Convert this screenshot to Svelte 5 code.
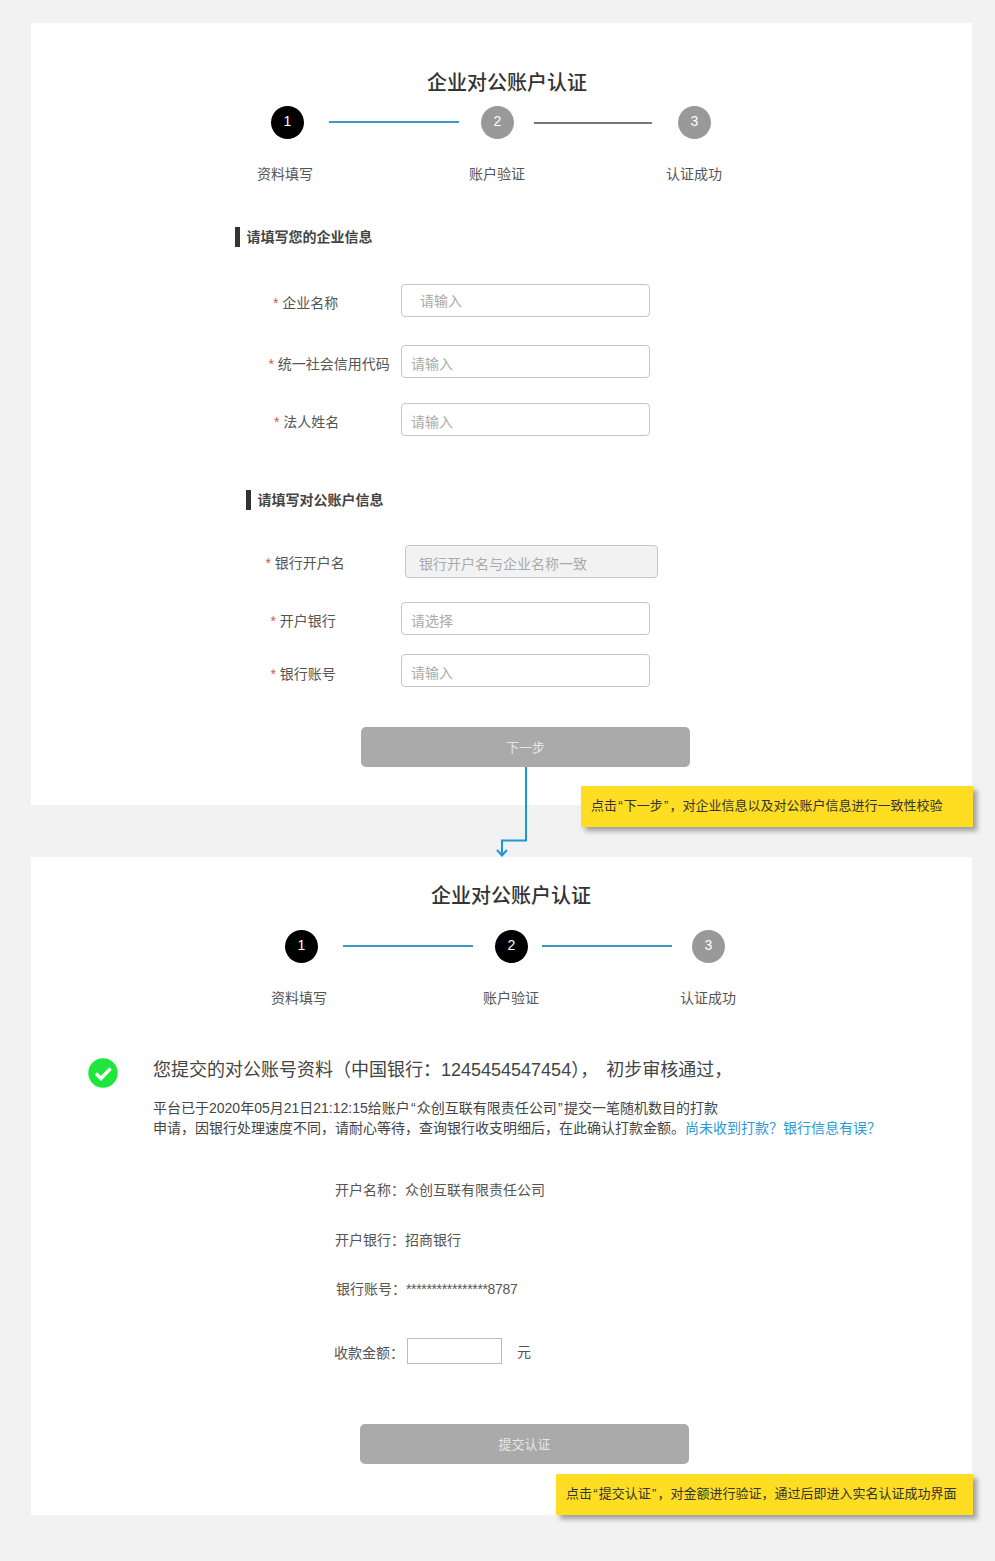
<script>
  const companyRows = [
    { name: '企业名称', left: 242, top: 37, hint: '请输入', pad: 19, drop: 9 },
    { name: '统一社会信用代码', left: 237.5, top: 28, hint: '请输入', drop: 9 },
    { name: '法人姓名', left: 243, top: 25, hint: '请输入', drop: 9 },
  ]
  const bankRows = [
    { name: '银行开户名', left: 234.5, top: 35, hint: '银行开户名与企业名称一致', disabled: true, drop: 8 },
    { name: '开户银行', left: 239.5, top: 24, hint: '请选择', drop: 9 },
    { name: '银行账号', left: 239.5, top: 19, hint: '请输入', drop: 10 },
  ]
  const details = [
    { key: '开户名称：', value: '众创互联有限责任公司', cls: 'd1' },
    { key: '开户银行：', value: '招商银行', cls: 'd2' },
    { key: '银行账号：', value: '****************8787', cls: 'd3' },
  ]
</script>

{#snippet steps(active, cls)}
  <div class="stepper {cls}">
    <span class="dot on">1</span>
    <span class="line blue first"></span>
    <span class="dot" class:on={active > 1}>2</span>
    <span class="line second" class:blue={active > 1}></span>
    <span class="dot">3</span>
  </div>
  <div class="step-labels {cls}">
    <span>资料填写</span>
    <span>账户验证</span>
    <span>认证成功</span>
  </div>
{/snippet}

{#snippet formRow(row)}
  <div class="row" style:margin-top="{row.top}px">
    <label class="row-label" style:padding-left="{row.left}px" style:margin-top="{row.drop}px"><i>*</i> {row.name}</label>
    <input
      class="field"
      class:disabled={row.disabled}
      class:wide={row.pad}
      disabled={row.disabled}
      placeholder={row.hint}
    />
  </div>
{/snippet}

<div class="page">
  <section class="card first-card">
    <h1 class="title t1">企业对公账户认证</h1>
    {@render steps(1, 's1')}

    <h2 class="section sec1">请填写您的企业信息</h2>
    {#each companyRows as row}
      {@render formRow(row)}
    {/each}

    <h2 class="section sec2">请填写对公账户信息</h2>
    {#each bankRows as row}
      {@render formRow(row)}
    {/each}

    <button class="primary next">下一步</button>
  </section>

  <section class="card second-card">
    <h1 class="title t2">企业对公账户认证</h1>
    {@render steps(2, 's2')}

    <div class="result">
      <svg class="ok" viewBox="0 0 30 30" width="30" height="30">
        <circle cx="15" cy="15" r="14.700" fill="#1fe53d" />
        <path d="M8 15.500l5 5 9.500-10" fill="none" stroke="#fff" stroke-width="3.400" />
      </svg>
      <div class="result-text">
        <p class="lead">您提交的对公账号资料（中国银行：1245454547454），<span class="tail">初步审核通过，</span></p>
        <p class="sub">平台已于2020年05月21日21:12:15给账户<span class="q">“</span>众创互联有限责任公司<span class="q">”</span>提交一笔随机数目的打款<br />申请，因银行处理速度不同，请耐心等待，查询银行收支明细后，在此确认打款金额。<a href="#top">尚未收到打款？银行信息有误？</a></p>
      </div>
    </div>

    {#each details as d}
      <div class="detail {d.cls}"><span class="key">{d.key}</span><span class="val">{d.value}</span></div>
    {/each}

    <div class="amount">
      <span class="key">收款金额：</span>
      <input class="money" />
      <span class="unit">元</span>
    </div>

    <button class="primary submit">提交认证</button>
  </section>

  <div class="note note1">点击<span class="q">“</span>下一步<span class="q">”</span>，对企业信息以及对公账户信息进行一致性校验</div>
  <div class="note note2">点击<span class="q">“</span>提交认证<span class="q">”</span>，对金额进行验证，通过后即进入实名认证成功界面</div>

  <svg class="arrow" width="40" height="92" viewBox="0 0 40 92">
    <path d="M34 0V73.500H10V89" fill="none" stroke="#1a96dc" stroke-width="2" />
    <path d="M5 83l5 5.500 5-5.500" fill="none" stroke="#1a96dc" stroke-width="2" />
  </svg>
</div>

<style>
  :global(body) {
    margin: 0;
    background: #f2f2f2;
  }
  .page {
    position: relative;
    height: 1561px;
    padding-top: 23px;
    box-sizing: border-box;
    font-family: "Liberation Sans", "Noto Sans CJK SC", sans-serif;
    font-size: 14px;
    color: #444;
  }
  .card {
    width: 941px;
    margin-left: 31px;
    background: #fff;
    overflow: hidden;
  }
  .first-card { height: 782px; padding-top: 46px; box-sizing: border-box; }
  .second-card { height: 658px; margin-top: 52px; padding-top: 25px; box-sizing: border-box; }

  .title {
    margin: 0;
    font-size: 20px;
    line-height: 28px;
    font-weight: 500;
    color: #333;
  }
  .t1 { margin-left: 396px; }
  .t2 { margin-left: 400px; }

  .q { margin: 0 1.200px; }

  .stepper {
    display: flex;
    align-items: center;
    height: 33px;
  }
  .stepper.s1 { margin: 9px 0 0 240px; }
  .stepper.s2 { margin: 20px 0 0 254px; }
  .dot {
    flex: none;
    width: 33px;
    height: 33px;
    border-radius: 50%;
    background: #999;
    color: #fff;
    font-size: 14px;
    line-height: 31px;
    text-align: center;
  }
  .dot.on { background: #000; }
  .line {
    flex: none;
    height: 2px;
    margin-bottom: 2px;
    background: #777;
  }
  .line.blue { background: #3a9ac4; }
  .line.first { width: 130px; margin-left: 25px; margin-right: 22px; }
  .s1 .line.second { width: 118px; margin: 0 26px 0 20px; }
  .s2 .line.second { width: 130px; margin-left: 14px; margin-right: 20px; }

  .step-labels {
    display: flex;
    margin-top: 25px;
    line-height: 20px;
    color: #555;
  }
  .step-labels.s1 { margin-left: 226px; }
  .step-labels.s2 { margin-left: 240px; }
  .step-labels span { width: 56px; }
  .step-labels span + span { margin-left: 156px; }
  .step-labels span:last-child { margin-left: 141px; }

  .section {
    margin: 0;
    height: 20px;
    border-left: 5px solid #333;
    padding-left: 6.500px;
    font-size: 14px;
    line-height: 20px;
    font-weight: 700;
    color: #444;
  }
  .sec1 { margin: 43px 0 0 204px; }
  .sec2 { margin: 54px 0 0 215px; }

  .row {
    display: flex;
    align-items: flex-start;
    height: 33px;
  }
  .row-label {
    flex: none;
    width: 370px;
    box-sizing: border-box;
    line-height: 20px;
    color: #555;
    white-space: nowrap;
  }
  .row-label i {
    font-style: normal;
    color: #d9534f;
  }
  .field {
    flex: none;
    width: 249px;
    height: 33px;
    box-sizing: border-box;
    padding: 5px 9px 0;
    border: 1px solid #c6c6c6;
    border-radius: 4px;
    background: #fff;
    font: inherit;
    outline: none;
  }
  .field::placeholder { color: #aaa; opacity: 1; }
  .field.wide { padding: 0 18px; }
  .field.disabled {
    width: 253px;
    margin-left: 4px;
    padding: 5px 13px 0;
    background: #f2f2f2;
  }

  .primary {
    display: block;
    width: 329px;
    height: 40px;
    padding: 0 0 2px;
    border: none;
    border-radius: 5px;
    background: #aaa;
    color: #e6e6e6;
    font: inherit;
    font-size: 13px;
  }
  .next { margin: 40px 0 0 330px; }
  .submit { margin: 60px 0 0 329px; }

  .result {
    display: flex;
    margin: 49px 0 0 57px;
  }
  .ok { flex: none; margin: 1px 35px 0 0; }
  .result-text p { margin: 0; }
  .lead {
    font-size: 18px;
    line-height: 26px;
    color: #444;
    white-space: nowrap;
  }
  .tail { margin-left: 8px; }
  .sub {
    margin-top: 15px !important;
    line-height: 20px;
    color: #444;
    white-space: nowrap;
  }
  .sub a { color: #2a9ad8; text-decoration: none; }

  .detail {
    display: flex;
    line-height: 20px;
    color: #555;
  }
  .d1 { margin: 42px 0 0 304px; }
  .d2 { margin: 30px 0 0 304px; }
  .d3 { margin: 29px 0 0 305px; }
  .d3 .val { letter-spacing: -0.350px; }
  .key { width: 70px; flex: none; }

  .amount {
    display: flex;
    align-items: center;
    height: 26px;
    margin: 39px 0 0 303px;
    color: #555;
  }
  .amount .key { width: 73px; padding-top: 1px; }
  .money {
    width: 95px;
    height: 26px;
    box-sizing: border-box;
    border: 1px solid #bbb;
    background: #fff;
    outline: none;
  }
  .unit { margin: 0 0 1px 15px; }

  /* annotations laid over the two cards */
  .note {
    position: absolute;
    left: 581px;
    top: 786px;
    width: 392px;
    height: 41px;
    box-sizing: border-box;
    padding-left: 10px;
    background: #ffdd22;
    box-shadow: 4px 4px 5px rgba(0, 0, 0, 0.35);
    font-size: 13px;
    line-height: 39px;
    color: #333;
    white-space: nowrap;
  }
  .note2 {
    left: 556px;
    top: 1474px;
    width: 417px;
  }
  .arrow {
    position: absolute;
    left: 492px;
    top: 767px;
  }
</style>
